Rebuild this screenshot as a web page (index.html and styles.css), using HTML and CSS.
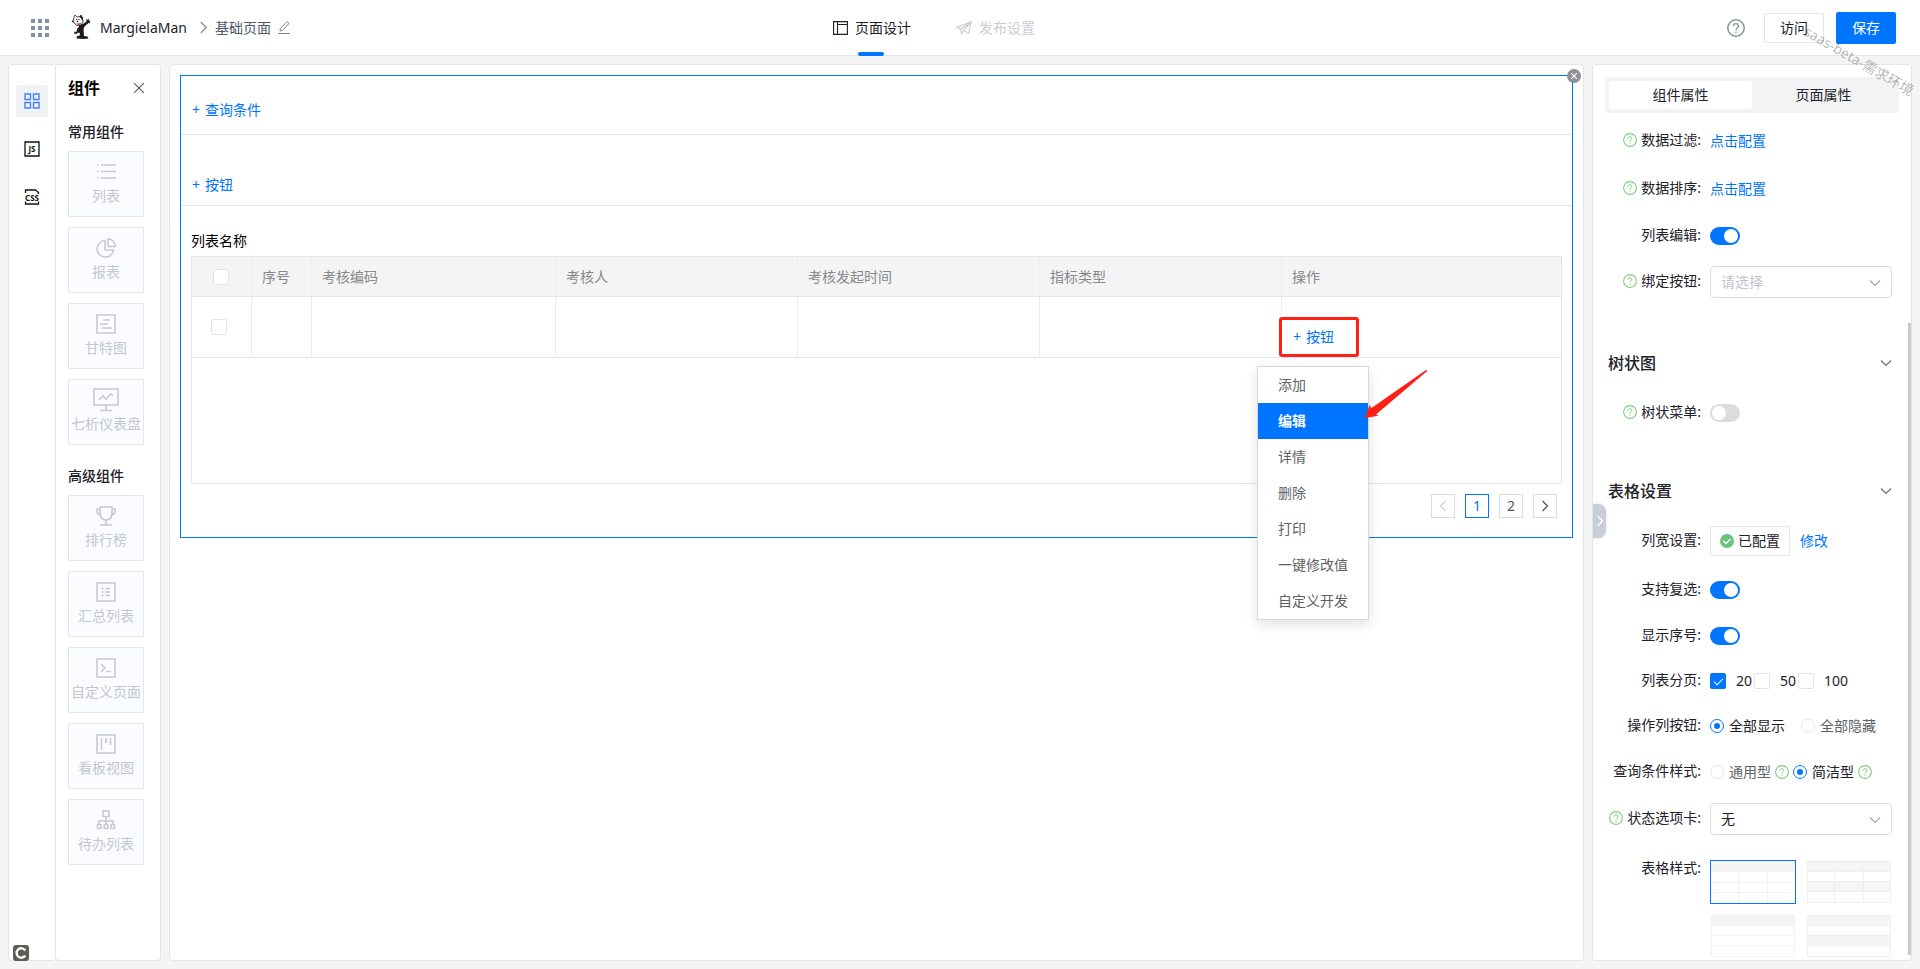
FILE: index.html
```html
<!DOCTYPE html>
<html lang="zh-CN">
<head>
<meta charset="utf-8">
<title>页面设计</title>
<link rel="stylesheet" href="styles.css">
</head>
<body>
<svg class="defs" aria-hidden="true">
  <symbol id="help" viewBox="0 0 14 14"><circle cx="7" cy="7" r="6.4" fill="none" stroke="currentColor" stroke-width="1.1"/><path d="M5.1 5.6A1.9 1.9 0 1 1 7.9 7.2Q7 7.7 7 8.6M7 9.7v1.2" fill="none" stroke="currentColor" stroke-width="1"/></symbol>
  <symbol id="down" viewBox="0 0 12 12"><path d="M1 3.5l5 5 5-5" fill="none" stroke="currentColor" stroke-width="1.2"/></symbol>
  <symbol id="right" viewBox="0 0 12 12"><path d="M3.5 1l5 5-5 5" fill="none" stroke="currentColor" stroke-width="1.3"/></symbol>
</svg>
<header class="topbar">
  <div class="brand">
    <svg class="grid-icon" viewBox="0 0 18 18" fill="#8690a2"><path d="M0 0h4v4H0zM7 0h4v4H7zM14 0h4v4h-4zM0 7h4v4H0zM7 7h4v4H7zM14 7h4v4h-4zM0 14h4v4H0zM7 14h4v4H7zM14 14h4v4h-4z"/></svg>
    <svg class="logo" viewBox="0 0 22 25">
      <path d="M0 5.500l3 .5 1-1 .5 2L8 9h6l3.500-2.500-.5-2.500 1.500 1 1-1.500.5 2 1.500.5-1 1.500 1 1-2-.5-4 3.500-1 2.500 .5 7 3.500.500 1 2-5 .5-7-.5.5-2.500 3-.500-.5-3-2 .5-1 1-2.500-.5.500-2 2 .500.500-3 2-2.500-.5-2-4-2-3-.500 1-1z" fill="#1c1a1a"/>
      <path d="M5 2l1-2 2 2 3-.5L12 0l1.500 3 .5 4-2 3-4 .5-3-2.500-.5-3z" fill="#fff" stroke="#222" stroke-width=".8"/>
      <path d="M6.500 8.200q3 .8 6-.8-.8 2.800-3.500 2.600z" fill="#d8322f"/>
      <path d="M10.500 1.500l1.500-1.500 2 3 0 3-2-2.500z" fill="#222"/><circle cx="7.500" cy="4.500" r=".6"/><circle cx="10" cy="4.500" r=".6"/><circle cx="8.500" cy="6.500" r=".8"/>
    </svg>
    <span class="brand-name">MargielaMan</span>
    <svg class="crumb-sep" viewBox="0 0 12 12"><use href="#right"/></svg>
    <span class="page-name">基础页面</span>
    <svg class="pencil" viewBox="0 0 12 13" fill="none" stroke="#7d8592"><path d="M2 10l.4-2.600L8.600 1.100q.8-.7 1.500 0l.5.500q.6.700 0 1.400L4.500 9.400zM0 12.500h12"/></svg>
  </div>
  <nav class="tabs">
    <a class="tab tab-on" href="#design"><svg width="15" height="14" viewBox="0 0 15 14" fill="none" stroke="currentColor" stroke-width="1.100"><path d="M.6.6h13.800v12.800H.6zM4.500.6v12.800M4.500 3.500h9.900"/></svg>页面设计</a>
    <a class="tab" href="#publish"><svg width="16" height="14" viewBox="0 0 16 14" fill="none" stroke="currentColor" stroke-width="1.200"><path d="M.8 6.200L15.200.8 12.800 12.200 7.500 9.500 5.500 12.800 4.500 8.200zM4.500 8.200L15 1 7.500 9.500"/></svg>发布设置</a>
  </nav>
  <div class="actions">
    <svg class="help-big"><use href="#help"/></svg>
    <button class="btn">访问</button>
    <button class="btn btn-main">保存</button>
  </div>
  <div class="watermark">saas-beta-需求环境</div>
</header>

<main class="work">
  <aside class="left">
    <div class="rail">
      <button class="rail-btn rail-on" aria-label="组件"><svg viewBox="0 0 16 16" fill="none" stroke="#4080ff" stroke-width="1.400"><path d="M1 1h5.500v5.500H1zM9.500 1H15v5.500H9.500zM1 9.500h5.500V15H1zM9.500 9.500H15V15H9.500z"/></svg></button>
      <button class="rail-btn" aria-label="脚本"><svg viewBox="0 0 16 16"><path d="M1 1h14v14H1z" fill="none" stroke="#111" stroke-width="1.300"/><text x="8" y="11" text-anchor="middle" class="glyph">JS</text></svg></button>
      <button class="rail-btn" aria-label="样式"><svg viewBox="0 0 16 16"><path d="M1.500 4V1h10L14.500 3.500V5M1.500 12.500V15h13v-2.500" fill="none" stroke="#111" stroke-width="1.300"/><text x="8" y="11.500" text-anchor="middle" class="glyph">CSS</text></svg></button>
      <svg class="corner-mark" viewBox="0 0 16 16"><rect width="16" height="16" rx="3" fill="#5c5c5c"/><path d="M12.300 5.500A4.700 4.700 0 1 0 12.300 10.500" fill="none" stroke="#fffbe8" stroke-width="2.400"/></svg>
    </div>
    <section class="palette">
      <div class="palette-head"><h2>组件</h2><button class="plain" aria-label="关闭"><svg width="10" height="10" viewBox="0 0 10 10"><path d="M0 0l10 10M10 0L0 10" stroke="#555" stroke-width="1.100"/></svg></button></div>
      <h3>常用组件</h3>
      <div class="cards">
        <button class="card"><svg viewBox="0 0 20 20"><path d="M5 3h15M5 9.500h15M5 16h15M1 3h1.500M1 9.500h1.500M1 16h1.500"/></svg>列表</button>
        <button class="card"><svg viewBox="0 0 20 20"><path d="M9 2.500A8.300 8.300 0 1 0 17.500 12H9zM12 .8A8.300 8.300 0 0 1 19.500 8.500H12z"/></svg>报表</button>
        <button class="card"><svg viewBox="0 0 20 20"><path d="M1 1h18v18H1zM7 6h7M4 10h8M6 14h10"/></svg>甘特图</button>
        <button class="card"><svg class="wide" viewBox="0 0 26 24"><path d="M1 1h24v16H1zM13 17v5M7 22.500h12M6 12l4-4 3 3 5-5 2 2"/></svg>七析仪表盘</button>
      </div>
      <h3 class="second">高级组件</h3>
      <div class="cards">
        <button class="card"><svg viewBox="0 0 20 20"><path d="M4 1h12v7q-1 6-6 6T4 8zM4 3H1v3q.5 2.500 3.500 3M16 3h3v3q-.5 2.500-3.500 3M10 14v5M4 19h12"/></svg>排行榜</button>
        <button class="card"><svg viewBox="0 0 20 20"><path d="M1 1h18v18H1zM9 6.500h5M9 10h5M9 13.500h5M5.500 6.500h2M5.500 10h2M5.500 13.500h2"/></svg>汇总列表</button>
        <button class="card"><svg viewBox="0 0 20 20"><path d="M1 1h18v18H1zM5 6l4 4-4 4M10 13.500h5"/></svg>自定义页面</button>
        <button class="card"><svg viewBox="0 0 20 20"><path d="M1 1h18v18H1zM5.500 4v12M10 4v5M14.500 4v7"/></svg>看板视图</button>
        <button class="card"><svg viewBox="0 0 20 20"><path d="M7 1h6v5.500H7zM10 6.500v8M3 14.500V11h14v3.500M1.500 14.500h3.500v4H1.500zM8.200 14.500h3.600v4H8.200zM15 14.500h3.500v4H15z"/></svg>待办列表</button>
      </div>
    </section>
  </aside>

  <section class="canvas">
    <div class="block">
      <button class="block-close" aria-label="删除"><svg width="14" height="14" viewBox="0 0 14 14"><circle cx="7" cy="7" r="7" fill="#8f9194"/><path d="M4.200 4.200l5.600 5.600M9.800 4.200L4.200 9.800" stroke="#fff" stroke-width="1.200"/></svg></button>
      <div class="strip query"><button class="add"><span>+</span>查询条件</button></div>
      <div class="strip ops"><button class="add"><span>+</span>按钮</button></div>
      <div class="list">
        <div class="list-name">列表名称</div>
        <div class="grid-box">
          <table>
            <colgroup><col class="c-s"><col class="c-s"><col class="c-l"><col class="c-m"><col class="c-m"><col class="c-m"><col></colgroup>
            <thead><tr><th class="pick"><input type="checkbox" class="box" aria-label="全选"></th><th>序号</th><th>考核编码</th><th>考核人</th><th>考核发起时间</th><th>指标类型</th><th>操作</th></tr></thead>
            <tbody><tr><td class="pick"><input type="checkbox" class="box" aria-label="选择"></td><td></td><td></td><td></td><td></td><td></td>
              <td class="op-cell"><button class="add"><span>+</span>按钮</button>
                <div class="mark"></div>
                <ul class="menu"><li>添加</li><li class="on">编辑</li><li>详情</li><li>删除</li><li>打印</li><li>一键修改值</li><li>自定义开发</li></ul>
                <svg class="arrow" viewBox="0 0 64 48"><path d="M62 0L63.500 .8 12 44.500 14.500 45.800 1 48 5.500 35 7.500 38z" fill="#ff1f14"/></svg>
              </td></tr></tbody>
          </table>
        </div>
        <nav class="pager">
          <button class="off" aria-label="上一页"><svg class="flip"><use href="#right"/></svg></button><button class="cur">1</button><button>2</button><button aria-label="下一页"><svg><use href="#right"/></svg></button>
        </nav>
      </div>
    </div>
  </section>

  <aside class="props">
    <button class="fold" aria-label="收起"><svg width="12" height="12"><use href="#right"/></svg></button>
    <div class="thumb"></div>
    <div class="seg"><button class="on">组件属性</button><button>页面属性</button></div>
    <form class="form">
      <div class="row"><span class="lab"><svg class="q"><use href="#help"/></svg>数据过滤:</span><a href="#filter">点击配置</a></div>
      <div class="row"><span class="lab"><svg class="q"><use href="#help"/></svg>数据排序:</span><a href="#sort">点击配置</a></div>
      <div class="row short"><label class="lab" for="edit">列表编辑:</label><input id="edit" type="checkbox" class="switch" checked></div>
      <div class="row short"><label class="lab" for="bind"><svg class="q"><use href="#help"/></svg>绑定按钮:</label><div class="sel"><select id="bind" class="hint"><option>请选择</option></select><svg><use href="#down"/></svg></div></div>
      <h3 class="first">树状图<svg><use href="#down"/></svg></h3>
      <div class="row tall"><label class="lab" for="tree"><svg class="q"><use href="#help"/></svg>树状菜单:</label><input id="tree" type="checkbox" class="switch"></div>
      <h3>表格设置<svg><use href="#down"/></svg></h3>
      <div class="row tall"><span class="lab">列宽设置:</span><span class="chip"><svg width="14" height="14" viewBox="0 0 14 14"><circle cx="7" cy="7" r="7" fill="#6ac47b"/><path d="M3.500 7l2.500 2.500 4.500-4.500" fill="none" stroke="#fff" stroke-width="1.300"/></svg>已配置</span><a href="#width" class="change">修改</a></div>
      <div class="row short"><label class="lab" for="multi">支持复选:</label><input id="multi" type="checkbox" class="switch" checked></div>
      <div class="row short"><label class="lab" for="num">显示序号:</label><input id="num" type="checkbox" class="switch" checked></div>
      <div class="row sizes"><span class="lab">列表分页:</span><label><input type="checkbox" class="box" checked>20</label><label><input type="checkbox" class="box">50</label><label><input type="checkbox" class="box">100</label></div>
      <div class="row short"><span class="lab">操作列按钮:</span><label class="rad"><input type="radio" name="op" checked>全部显示</label><label class="rad dim spaced"><input type="radio" name="op">全部隐藏</label></div>
      <div class="row short"><span class="lab">查询条件样式:</span><label class="rad dim"><input type="radio" name="qs">通用型</label><svg class="q after"><use href="#help"/></svg><label class="rad"><input type="radio" name="qs" checked>简洁型</label><svg class="q after"><use href="#help"/></svg></div>
      <div class="row"><label class="lab" for="state"><svg class="q"><use href="#help"/></svg>状态选项卡:</label><div class="sel"><select id="state"><option>无</option></select><svg><use href="#down"/></svg></div></div>
      <div class="row styles"><span class="lab">表格样式:</span>
        <div class="samples">
          <button type="button" class="sample chosen" aria-label="样式一"><svg viewBox="0 0 84 42"><path d="M0 0h84v11H0z" fill="#f3f3f3"/><path d="M0 21.500h84M0 31.500h84M27.500 11v31M56.500 11v31" stroke="#f1f1f1"/></svg></button>
          <button type="button" class="sample" aria-label="样式二"><svg viewBox="0 0 84 42"><path d="M0 0h84v11H0zM0 21h84v9H0z" fill="#f5f5f5"/><path d="M0 10.500h84M0 20.500h84M0 30.500h84M27.500 0v42M56.500 0v42M.5.5h83v41H.5z" fill="none" stroke="#efefef"/></svg></button>
          <button type="button" class="sample" aria-label="样式三"><svg viewBox="0 0 84 42"><path d="M0 0h84v11H0z" fill="#f3f3f3"/><path d="M0 20.500h84M0 30.500h84M.5.5h83v41H.5z" fill="none" stroke="#f1f1f1"/></svg></button>
          <button type="button" class="sample" aria-label="样式四"><svg viewBox="0 0 84 42"><path d="M0 0h84v11H0zM0 21h84v9H0z" fill="#f5f5f5"/><path d="M0 10.500h84M0 20.500h84M0 30.500h84M.5.5h83v41H.5z" fill="none" stroke="#efefef"/></svg></button>
        </div>
      </div>
    </form>
  </aside>
</main>
</body>
</html>
```
FILE: styles.css
```css
* { box-sizing: border-box; }
body {
  margin: 0;
  height: 100vh;
  display: flex;
  flex-direction: column;
  overflow: hidden;
  background: #f4f4f4;
  color: #1d2129;
  font: 14px/20px "Noto Sans", "Noto Sans CJK SC", sans-serif;
}
button, input, select { font: inherit; color: inherit; margin: 0; }
button { background: none; border: 0; padding: 0; cursor: pointer; }
a { color: #0075ff; text-decoration: none; }
h2, h3, ul { margin: 0; padding: 0; }
svg { flex: none; display: block; }
.defs { position: absolute; width: 0; height: 0; }

.topbar {
  position: relative;
  flex: none;
  height: 56px;
  display: grid;
  grid-template-columns: 1fr auto 1fr;
  background: #fff;
  border-bottom: 1px solid #e5e6eb;
}
.brand { display: flex; align-items: center; padding-left: 31px; }
.grid-icon { width: 18px; height: 18px; }
.logo { width: 22px; height: 25px; margin: 0 9px 0 20px; }
.brand-name { font-size: 14px; }
.crumb-sep { width: 13px; height: 13px; margin: 0 5px 0 10px; color: #8a919e; }
.page-name { color: #4e5969; }
.pencil { width: 12px; height: 13px; margin-left: 7px; }
.tabs { display: flex; gap: 45px; padding-right: 52px; }
.tab { position: relative; display: flex; align-items: center; gap: 7px; color: #c9cdd4; }
.tab-on { color: #1d2129; }
.tab-on::after {
  content: "";
  position: absolute;
  left: 50%;
  bottom: -1px;
  width: 26px;
  height: 4px;
  margin-left: -14px;
  border-radius: 2px;
  background: #0075ff;
}
.actions { display: flex; align-items: center; justify-content: flex-end; gap: 12px; padding-right: 24px; }
.help-big { width: 18px; height: 18px; margin-right: 7px; color: #86909c; }
.btn { width: 60px; height: 30px; border: 1px solid #e5e6eb; border-radius: 2px; }
.btn-main { height: 32px; border: 0; background: #0075ff; color: #fff; }
.watermark {
  position: absolute;
  right: -1px;
  top: 51px;
  z-index: 5;
  font-size: 14px;
  white-space: nowrap;
  color: rgba(0, 0, 0, 0.3);
  transform: rotate(30deg);
  pointer-events: none;
}

.work { flex: 1; min-height: 0; display: flex; gap: 8px; padding: 8px; }
.left { display: flex; }
.rail, .palette, .canvas, .props { background: #fff; border: 1px solid #e3e5ec; border-radius: 4px; }
.rail { position: relative; width: 47px; padding-top: 20px; display: flex; flex-direction: column; align-items: center; gap: 16px; border-right: 0; }
.rail-btn { width: 32px; height: 32px; display: grid; place-items: center; border-radius: 2px; }
.rail-btn svg { width: 16px; height: 16px; }
.rail-on { background: #f2f3f5; }
.glyph { font: bold 8px "Noto Sans", sans-serif; fill: #111; }
.corner-mark { position: absolute; left: 4px; bottom: -1px; width: 16px; height: 16px; }
.palette { width: 106px; padding: 13px 12px 0; }
.palette-head { display: flex; align-items: center; justify-content: space-between; padding-right: 4px; }
h2 { font-size: 16px; line-height: 20px; font-weight: 700; color: #000; }
.palette h3 { font-size: 14px; line-height: 20px; font-weight: 500; margin: 24px 0 9px; }
.palette h3.second { margin: 21px 0 9px; }
.cards { display: grid; gap: 10px; }
.card {
  height: 66px;
  display: flex;
  flex-direction: column;
  align-items: center;
  padding-top: 10px;
  gap: 4px;
  width: 76px;
  border: 1px solid #e3e5ec;
  border-radius: 2px;
  background: #fafcff;
  color: #c2c7d0;
  white-space: nowrap;
}
.card svg { width: 20px; height: 20px; fill: none; stroke: #c5c9d1; stroke-width: 1.6; }
.card svg.wide { width: 26px; height: 24px; margin: -2px 0; }

.canvas { flex: 1; min-width: 0; padding: 10px; }
.block { position: relative; border: 1px solid #0075ff; }
.block-close { position: absolute; right: -9px; top: -7px; }
.strip { border-bottom: 1px solid #e3e5ec; padding-left: 11px; display: flex; }
.query { padding-top: 24px; padding-bottom: 14px; }
.ops { padding-top: 40px; padding-bottom: 10px; }
.add { display: flex; gap: 5px; line-height: 20px; color: #0075ff; }
.list { padding: 25px 10px 19px; }
.list-name { color: #000; margin-bottom: 5px; }
.grid-box { height: 228px; border: 1px solid #e3e5ec; }
table { width: 100%; border-collapse: separate; border-spacing: 0; table-layout: fixed; }
.c-s { width: 60px; }
.c-l { width: 244px; }
.c-m { width: 242px; }
th, td { padding: 0 10px; border-right: 1px solid #ebedf3; border-bottom: 1px solid #e3e5ec; text-align: left; font-weight: 400; }
th:last-child, td:last-child { border-right: 0; }
th { height: 40px; background: #f4f4f4; color: #86888c; }
td { height: 61px; }
th.pick { padding: 0 2px 0 0; }
td.pick { padding: 0 6px 0 0; }
.pick .box { margin: 0 auto; }
.op-cell { position: relative; padding: 20px 11px 0; }
.mark { position: absolute; left: -3px; top: 20px; width: 80px; height: 40px; border: 3px solid #ff1f14; border-radius: 3px; }
.menu {
  position: absolute;
  left: -25px;
  top: 69px;
  width: 112px;
  list-style: none;
  border: 1px solid #d9d9d9;
  background: #fff;
  box-shadow: 0 4px 12px rgba(0, 0, 0, 0.12);
  color: #606266;
}
.menu li { line-height: 36px; padding-left: 20px; white-space: nowrap; }
.menu .on { background: #0075ff; color: #fff; font-weight: 700; }
.arrow { position: absolute; left: 82px; top: 73px; width: 64px; height: 48px; }
.pager { display: flex; justify-content: flex-end; gap: 10px; padding: 10px 5px 0 0; }
.pager button { width: 24px; height: 24px; display: grid; place-items: center; border: 1px solid #dcdde0; color: #555; }
.pager svg { width: 12px; height: 12px; }
.pager .flip { transform: rotate(180deg); }
.pager .off { color: #d0d2d6; }
.pager .cur { border-color: #0075ff; color: #0075ff; }

.box { appearance: none; display: block; width: 16px; height: 16px; border: 1px solid #e3e5ec; border-radius: 2px; background: #fff; }
.box:checked { border-color: #0075ff; background: #0075ff; display: grid; place-items: center; }
.box:checked::after { content: ""; width: 8px; height: 4px; border: solid #fff; border-width: 0 0 1px 1px; transform: translateY(-1px) rotate(-45deg); }
.switch { appearance: none; width: 30px; height: 18px; padding: 2px; border-radius: 9px; background: #dcdcdc; display: flex; }
.switch::before { content: ""; width: 14px; height: 14px; border-radius: 50%; background: #fff; }
.switch:checked { background: #0075ff; justify-content: flex-end; }

.props { position: relative; width: 320px; padding: 12px 12px 0; overflow: hidden; }
.fold { position: absolute; left: 0; top: 49%; width: 13px; height: 34px; display: grid; place-items: center; border-radius: 0 8px 8px 0; background: #c9cdd4; color: #fff; box-shadow: 0 0 4px rgba(0, 0, 0, 0.12); }
.thumb { position: absolute; right: 0; top: 258px; bottom: 5px; width: 3px; background: #c9c9c9; }
.seg { display: flex; padding: 4px; border-radius: 4px; background: #f2f3f5; }
.seg button { flex: 1; height: 28px; border-radius: 3px; }
.seg .on { background: #fff; }
.form { padding: 4px 7px 0 0; }
.row { height: 48px; display: flex; align-items: center; }
.short { height: 46px; }
.tall { height: 52px; }
.lab { width: 96px; margin-right: 9px; padding-bottom: 2px; display: flex; align-items: center; justify-content: flex-end; gap: 4px; white-space: nowrap; flex: none; }
.q { width: 14px; height: 14px; color: #7fd07c; }
.form h3 { display: flex; align-items: center; justify-content: space-between; height: 48px; margin-top: 28px; padding: 0 0 0 3px; font-size: 16px; font-weight: 500; }
.form h3.first { margin-top: 34px; }
.form h3 svg { width: 12px; height: 12px; color: #6b6e75; }
.sel { position: relative; flex: 1; }
.sel select { appearance: none; display: block; width: 100%; height: 32px; padding: 0 10px; border: 1px solid #dcdde0; border-radius: 4px; background: #fff; }
.sel .hint { color: #c0c4cc; }
.sel svg { position: absolute; right: 11px; top: 11px; width: 12px; height: 12px; color: #a0a4ab; pointer-events: none; }
.chip { display: flex; align-items: center; gap: 4px; height: 30px; padding: 0 9px; border: 1px solid #e3e5ec; border-radius: 2px; }
.change { margin-left: 10px; }
.sizes { height: 44px; }
.sizes label { display: flex; align-items: center; gap: 10px; margin-right: 2px; }
.rad { display: flex; align-items: center; gap: 5px; white-space: nowrap; }
.rad input { appearance: none; width: 14px; height: 14px; border: 1px solid #e3e5ec; border-radius: 50%; display: grid; place-items: center; }
.rad input:checked { border-color: #0075ff; }
.rad input:checked::before { content: ""; width: 6px; height: 6px; border-radius: 50%; background: #0075ff; }
.dim { color: #606266; }
.spaced { margin-left: 16px; }
.after { margin: 0 4px; }
.styles { height: auto; align-items: flex-start; padding-top: 17px; }
.styles .lab { height: 18px; }
.samples { display: grid; grid-template-columns: 1fr 1fr; gap: 10px; flex: 1; }
.sample { border: 1px solid transparent; }
.sample svg { width: 100%; height: auto; }
.chosen { border-color: #0075ff; }
```
